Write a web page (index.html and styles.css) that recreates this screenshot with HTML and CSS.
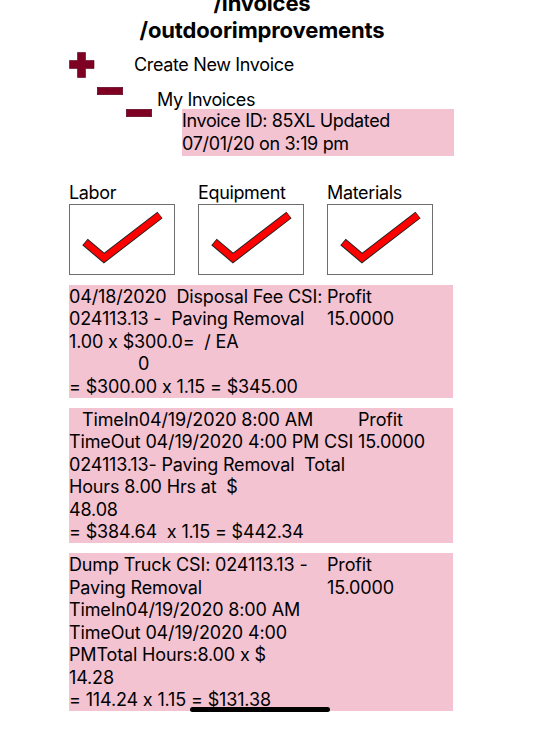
FILE: index.html
```html
<!DOCTYPE html>
<html lang="en">
<head>
<meta charset="utf-8">
<title>Invoices</title>
<link rel="stylesheet" href="styles.css">
</head>
<body>
<div class="page">
  <h1 class="title">/invoices<br>/outdoorimprovements</h1>

  <div class="nav nav-create">
    <svg class="icon-plus" width="26" height="26" viewBox="0 0 26 26"><path d="M8.5 0.5h8v8h8.5v8h-8.5v9h-8v-9h-8v-8h8z" fill="#7e0023" stroke="#55001a" stroke-width="0.6"/></svg>
    <span class="nav-text">Create New Invoice</span>
  </div>

  <div class="nav nav-mine">
    <svg class="icon-minus" width="26" height="8" viewBox="0 0 26 8"><rect x="0.3" y="0.3" width="25.4" height="7.4" fill="#7e0023" stroke="#55001a" stroke-width="0.6"/></svg>
    <span class="nav-text">My Invoices</span>
  </div>

  <div class="nav nav-detail">
    <svg class="icon-minus" width="26" height="8" viewBox="0 0 26 8"><rect x="0.3" y="0.3" width="25.4" height="7.4" fill="#7e0023" stroke="#55001a" stroke-width="0.6"/></svg>
    <div class="invoice-id">Invoice ID: 85XL Updated<br>07/01/20 on 3:19 pm</div>
  </div>

  <div class="checks">
    <div class="check">
      <div class="check-label">Labor</div>
      <div class="check-box">
        <svg width="104" height="69" viewBox="0 0 104 69"><polyline points="15,37 34,53 90,10" fill="none" stroke="#222" stroke-width="8.5" stroke-linejoin="miter"/><polyline points="15.6,37.4 34,53 89.6,10.4" fill="none" stroke="#ff0000" stroke-width="6.5" stroke-linejoin="miter"/></svg>
      </div>
    </div>
    <div class="check">
      <div class="check-label">Equipment</div>
      <div class="check-box">
        <svg width="104" height="69" viewBox="0 0 104 69"><polyline points="15,37 34,53 90,10" fill="none" stroke="#222" stroke-width="8.5" stroke-linejoin="miter"/><polyline points="15.6,37.4 34,53 89.6,10.4" fill="none" stroke="#ff0000" stroke-width="6.5" stroke-linejoin="miter"/></svg>
      </div>
    </div>
    <div class="check">
      <div class="check-label">Materials</div>
      <div class="check-box">
        <svg width="104" height="69" viewBox="0 0 104 69"><polyline points="15,37 34,53 90,10" fill="none" stroke="#222" stroke-width="8.5" stroke-linejoin="miter"/><polyline points="15.6,37.4 34,53 89.6,10.4" fill="none" stroke="#ff0000" stroke-width="6.5" stroke-linejoin="miter"/></svg>
      </div>
    </div>
  </div>

  <div class="card">
    <div class="card-main narrow">
      <div class="ln">04/18/2020  Disposal Fee CSI:</div>
      <div class="ln">024113.13 -  Paving Removal</div>
      <div class="ln">1.00 x $300.0=  / EA</div>
      <div class="ln indent">0</div>
      <div class="ln">= $300.00 x 1.15 = $345.00</div>
    </div>
    <div class="card-side">
      <div class="ln">Profit</div>
      <div class="ln">15.0000</div>
    </div>
  </div>

  <div class="card">
    <div class="card-main wide">
      <div class="ln lead">TimeIn04/19/2020 8:00 AM</div>
      <div class="ln">TimeOut 04/19/2020 4:00 PM CSI</div>
      <div class="ln">024113.13- Paving Removal  Total</div>
      <div class="ln">Hours 8.00 Hrs at  $</div>
      <div class="ln">48.08</div>
      <div class="ln">= $384.64  x 1.15 = $442.34</div>
    </div>
    <div class="card-side">
      <div class="ln">Profit</div>
      <div class="ln">15.0000</div>
    </div>
  </div>

  <div class="card">
    <div class="card-main narrow">
      <div class="ln">Dump Truck CSI: 024113.13 -</div>
      <div class="ln">Paving Removal</div>
      <div class="ln">TimeIn04/19/2020 8:00 AM</div>
      <div class="ln">TimeOut 04/19/2020 4:00</div>
      <div class="ln">PMTotal Hours:8.00 x $</div>
      <div class="ln">14.28</div>
      <div class="ln">= 114.24 x 1.15 = $131.38</div>
    </div>
    <div class="card-side">
      <div class="ln">Profit</div>
      <div class="ln">15.0000</div>
    </div>
  </div>
</div>
<div class="home-indicator"></div>
</body>
</html>
```

FILE: styles.css
```css
html, body {
  margin: 0;
  padding: 0;
  background: #ffffff;
}

body {
  font-family: Inter, "Noto Sans", Roboto, sans-serif;
  font-feature-settings: "calt" 0;
  color: #000;
  font-size: 18px;
  line-height: 23px;
  letter-spacing: -0.35px;
}

.page {
  padding-left: 69px;
  padding-bottom: 19px;
}

.title {
  margin: -10px 0 0 -69px;
  padding-right: 12px;
  font-size: 22px;
  line-height: 27px;
  font-weight: 700;
  letter-spacing: -0.15px;
  text-align: center;
}

.nav {
  display: flex;
}

.nav-create {
  margin-top: 8px;
  height: 25px;
  align-items: center;
}

.nav-create .icon-plus {
  flex: none;
}

.nav-create .nav-text {
  margin-left: 39px;
}

.nav-mine {
  margin-top: 10px;
  height: 22px;
  padding-left: 28px;
  align-items: flex-start;
}

.nav-mine .nav-text {
  margin-left: 34px;
  margin-top: 1px;
}

.nav-detail {
  padding-left: 57px;
  align-items: flex-start;
}

.icon-minus {
  flex: none;
}

.nav-detail .invoice-id {
  margin-left: 30px;
  width: 272px;
  height: 47px;
  background: #f3c3d1;
}

.checks {
  margin-top: 25px;
  display: grid;
  grid-template-columns: 106px 106px 106px;
  column-gap: 23px;
}

.check-label {
  height: 23px;
}

.check-box {
  width: 104px;
  height: 69px;
  border: 1px solid #6e6e6e;
}

.check-box svg {
  display: block;
}

.card {
  margin-top: 10px;
  width: 384px;
  background: #f3c3d1;
  display: flex;
  line-height: 22.4px;
  padding-top: 1px;
  letter-spacing: -0.15px;
}

.ln {
  white-space: pre;
}

.card-main.narrow {
  width: 258px;
  flex: none;
}

.card-main.wide {
  width: 289px;
  flex: none;
}

.ln.indent {
  padding-left: 69px;
}

.ln.lead {
  padding-left: 13px;
}

.home-indicator {
  position: fixed;
  left: 190px;
  bottom: 17px;
  width: 140px;
  height: 5px;
  border-radius: 3px;
  background: #000;
}
```
